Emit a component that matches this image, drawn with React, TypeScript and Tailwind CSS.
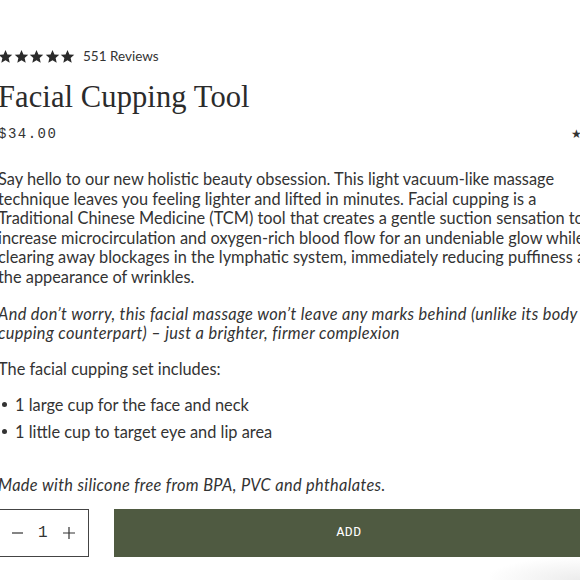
import React from "react";

const Star = ({ size = 14 }: { size?: number }) => (
  <svg width={size} height={size} viewBox="0 0 24 24" fill="#2b2b2b">
    <path d="M12 1.5l3.1 7.1 7.7.7-5.8 5.1 1.7 7.6L12 18l-6.7 4 1.7-7.6L1.2 9.3l7.7-.7z" />
  </svg>
);

export default function App() {
  return (
    <div className="w-[580px] h-[580px] overflow-hidden bg-white relative">
      <div className="ml-[-2px] w-[600px] pt-[46px] text-[#333]">
        <div className="flex items-center h-[20px]">
          <div className="flex gap-[0.5px]">
            <Star size={15} />
            <Star size={15} />
            <Star size={15} />
            <Star size={15} />
            <Star size={15} />
          </div>
          <span className="ml-[8px] text-[13.5px] font-['Lato',sans-serif] text-[#333]">551 Reviews</span>
        </div>
        <h1 className="mt-[11px] font-['Liberation_Serif',serif] text-[30.5px] leading-[40px] text-[#2b2b2b] tracking-[0.1px]">
          Facial Cupping Tool
        </h1>
        <div className="flex items-center justify-between pr-[16px] mt-[7px] h-[20px]">
          <span className="font-['Liberation_Mono',monospace] text-[14px] tracking-[1.5px] text-[#333]">$34.00</span>
          <span className="text-[12px]">★</span>
        </div>
        <div className="mt-[25px] font-['Lato',sans-serif] text-[16.35px] leading-[19.6px] text-[#333] whitespace-nowrap">
          <p>
            Say hello to our new holistic beauty obsession. This light vacuum-like massage
            <br />
            technique leaves you feeling lighter and lifted in minutes. Facial cupping is a
            <br />
            Traditional Chinese Medicine (TCM) tool that creates a gentle suction sensation to
            <br />
            increase microcirculation and oxygen-rich blood flow for an undeniable glow while
            <br />
            clearing away blockages in the lymphatic system, immediately reducing puffiness and
            <br />
            the appearance of wrinkles.
          </p>
          <p className="italic mt-[17px] tracking-[0.35px]">
            And don’t worry, this facial massage won’t leave any marks behind (unlike its body
            <br />
            cupping counterpart) – just a brighter, firmer complexion
          </p>
          <p className="mt-[16px]">The facial cupping set includes:</p>
          <ul className="mt-[16.5px] flex flex-col gap-[7.5px]">
            <li className="flex items-center">
              <span className="w-[5px] h-[5px] rounded-full bg-[#333] ml-[4px] mr-[8px]" />
              1 large cup for the face and neck
            </li>
            <li className="flex items-center">
              <span className="w-[5px] h-[5px] rounded-full bg-[#333] ml-[4px] mr-[8px]" />
              1 little cup to target eye and lip area
            </li>
          </ul>
          <p className="italic mt-[33px] tracking-[0.33px]">Made with silicone free from BPA, PVC and phthalates.</p>
        </div>
        <div className="flex mt-[15px] gap-[25px]">
          <div className="w-[101px] h-[48px] border border-[#444] flex items-center ml-[-10px] pl-[23px] gap-[15px] text-[#333] shrink-0">
            <svg width="11" height="12" viewBox="0 0 11 12" stroke="#333" strokeWidth="1.2"><path d="M0 6h11" /></svg>
            <span className="font-['Liberation_Mono',monospace] text-[16px] leading-none">1</span>
            <svg width="12" height="12" viewBox="0 0 12 12" stroke="#333" strokeWidth="1.2"><path d="M0 6h12M6 0v12" /></svg>
          </div>
          <div className="w-[470px] h-[48px] bg-[#4f5a41] flex items-center justify-center text-white font-['Liberation_Mono',monospace] text-[13px] tracking-[0.5px] shrink-0">
            ADD
          </div>
        </div>
      </div>
      <div className="absolute right-0 bottom-0 w-[90px] h-[22px] bg-[radial-gradient(ellipse_at_100%_100%,#ececec,transparent_75%)]" />
    </div>
  );
}
